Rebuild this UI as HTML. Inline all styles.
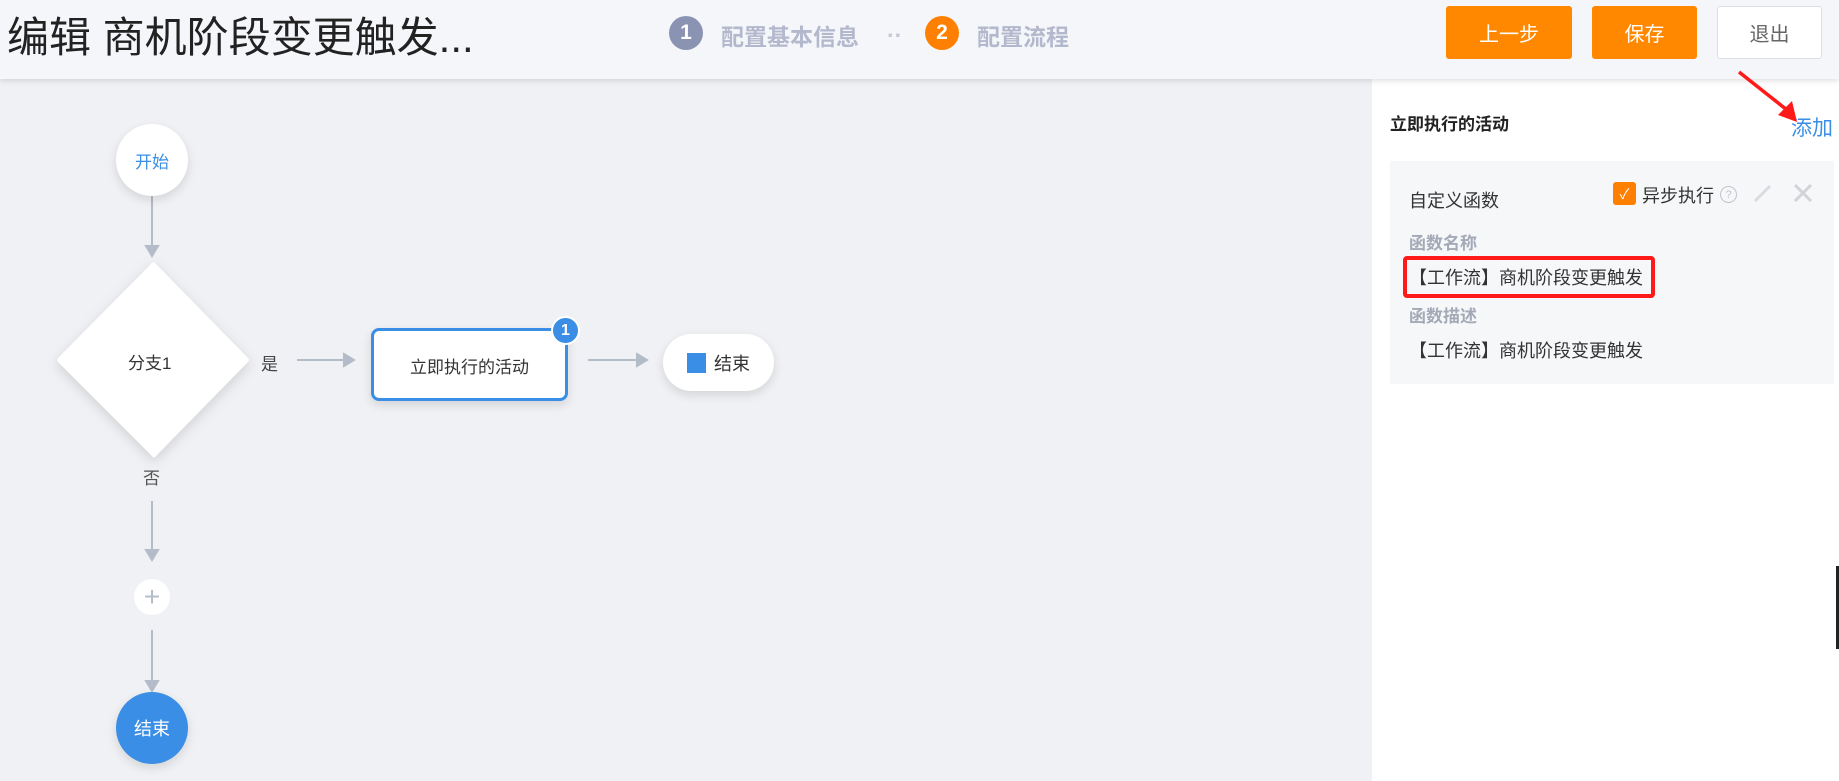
<!DOCTYPE html>
<html><head><meta charset="utf-8"><style>
*{margin:0;padding:0;box-sizing:border-box}
body{width:1839px;height:781px;overflow:hidden;background:#f0f1f4;font-family:"Liberation Sans","Noto Sans CJK SC",sans-serif;position:relative}
.a{position:absolute}
#hdr{left:0;top:0;width:1839px;height:79px;background:#f5f6fa;box-shadow:0 2px 5px rgba(0,0,0,.12);z-index:2}
.btn{position:absolute;top:6px;height:53px;border-radius:3px;color:#fff;font-size:20px;display:flex;align-items:center;justify-content:center;background:#ff8800}
.step{position:absolute;top:16px;width:34px;height:34px;border-radius:50%;color:#fff;font-weight:bold;font-size:21px;display:flex;align-items:center;justify-content:center}
.stxt{position:absolute;top:18px;font-size:23px;font-weight:bold;color:#b4b8cd}
#panel{left:1372px;top:79px;width:467px;height:702px;background:#fff}
.ct{display:flex;align-items:center;justify-content:center}
.sh{box-shadow:0 4px 10px rgba(0,0,0,.12)}
</style></head><body>
<div id="hdr" class="a">
 <div class="a" style="left:7px;top:12px;font-size:42px;color:#222;line-height:52px">编辑 商机阶段变更触发...</div>
 <div class="step" style="left:669px;background:#8a93b2">1</div>
 <div class="stxt" style="left:721px">配置基本信息</div>
 <div class="stxt" style="left:887px;color:#c5c8d6;top:22px">··</div>
 <div class="step" style="left:925px;background:#ff8000">2</div>
 <div class="stxt" style="left:977px">配置流程</div>
 <div class="btn" style="left:1446px;width:126px">上一步</div>
 <div class="btn" style="left:1592px;width:105px">保存</div>
 <div class="btn" style="left:1717px;width:105px;background:#fff;border:1px solid #dcdfe6;color:#666">退出</div>
</div>
<div id="panel" class="a">
 <div class="a" style="left:18px;top:31px;font-size:17px;font-weight:bold;color:#222">立即执行的活动</div>
 <div class="a" style="left:419px;top:33px;font-size:21px;color:#3a8ee6">添加</div>
 <div class="a" style="left:18px;top:82px;width:444px;height:223px;background:#f6f7f9">
  <div class="a" style="left:19px;top:26px;font-size:18px;color:#333">自定义函数</div>
  <div class="a ct" style="left:223px;top:21px;width:23px;height:23px;background:#ff8000;border-radius:3px;color:#fff;font-size:14px">✓</div>
  <div class="a" style="left:252px;top:21px;font-size:18px;color:#333">异步执行</div>
  <div class="a ct" style="left:330px;top:25px;width:17px;height:17px;border:1.5px solid #c0c4cc;border-radius:50%;font-size:11px;color:#c0c4cc">?</div>
  <svg class="a" style="left:362px;top:21px" width="22" height="22"><path d="M3 19 L18 4" stroke="#d8dbe0" stroke-width="3"/></svg>
  <svg class="a" style="left:403px;top:22px" width="20" height="20"><path d="M2 2L18 18M18 2L2 18" stroke="#d0d3d8" stroke-width="3"/></svg>
  <div class="a" style="left:19px;top:68px;font-size:17px;font-weight:bold;color:#a3a9b6">函数名称</div>
  <div class="a" style="left:13px;top:95px;width:252px;height:42px;border:4px solid #ff1a1a;border-radius:4px"></div>
  <div class="a" style="left:19px;top:103px;font-size:18px;color:#333">【工作流】商机阶段变更触发</div>
  <div class="a" style="left:19px;top:141px;font-size:17px;font-weight:bold;color:#a3a9b6">函数描述</div>
  <div class="a" style="left:19px;top:176px;font-size:18px;color:#333">【工作流】商机阶段变更触发</div>
 </div>
</div>
<svg class="a" style="left:1735px;top:68px;z-index:3" width="70" height="60"><path d="M4 4 L52 42" stroke="#ff1a1a" stroke-width="3.5"/><path d="M43 47 L62 54 L57 33 Z" fill="#ff1a1a"/></svg>
<div class="a" style="left:1836px;top:566px;width:3px;height:83px;background:#222"></div>
<svg class="a" style="left:0;top:0" width="1372" height="781">
 <g stroke="#b3bcc8" stroke-width="2" fill="#b3bcc8">
  <line x1="152" y1="196" x2="152" y2="248"/><path d="M146 246 L158 246 L152 256 Z"/>
  <line x1="297" y1="360" x2="346" y2="360"/><path d="M344 354 L354 360 L344 366 Z"/>
  <line x1="588" y1="360" x2="639" y2="360"/><path d="M637 354 L647 360 L637 366 Z"/>
  <line x1="152" y1="501" x2="152" y2="552"/><path d="M146 550 L158 550 L152 560 Z"/>
  <line x1="152" y1="630" x2="152" y2="683"/><path d="M146 681 L158 681 L152 691 Z"/>
 </g>
</svg>
<div class="a ct sh" style="left:116px;top:124px;width:72px;height:72px;border-radius:50%;background:#fff;color:#3a8ee6;font-size:17px">开始</div>
<svg class="a" style="left:50px;top:258px;filter:drop-shadow(0 4px 6px rgba(0,0,0,.13))" width="206" height="206"><path d="M102 5 Q104 3 106 6 L198 100 Q200 102 198 104 L106 198 Q104 201 102 198 L8 104 Q6 102 8 100 Z" fill="#fff"/></svg>
<div class="a" style="left:128px;top:349px;font-size:17px;color:#333">分支1</div>
<div class="a" style="left:261px;top:350px;font-size:17px;color:#444">是</div>
<div class="a" style="left:143px;top:464px;font-size:17px;color:#555">否</div>
<div class="a ct sh" style="left:371px;top:328px;width:197px;height:73px;border:3px solid #3a8ee6;border-radius:8px;background:#fff;font-size:17px;color:#333;padding-top:2px">立即执行的活动</div>
<div class="a ct" style="left:551px;top:316px;width:29px;height:29px;border-radius:50%;background:#3a8ee6;border:2px solid #fff;color:#fff;font-size:16px;font-weight:bold">1</div>
<div class="a ct sh" style="left:663px;top:334px;width:111px;height:57px;border-radius:29px;background:#fff;font-size:18px;color:#333"><span style="display:inline-block;width:19px;height:20px;background:#3a8ee6;margin-right:8px"></span>结束</div>
<div class="a ct" style="left:134px;top:579px;width:36px;height:36px;border-radius:50%;background:#fff;color:#b3bcc8;font-size:28px;line-height:1">+</div>
<div class="a ct sh" style="left:116px;top:692px;width:72px;height:72px;border-radius:50%;background:#3a8ee6;color:#fff;font-size:18px">结束</div>
</body></html>
